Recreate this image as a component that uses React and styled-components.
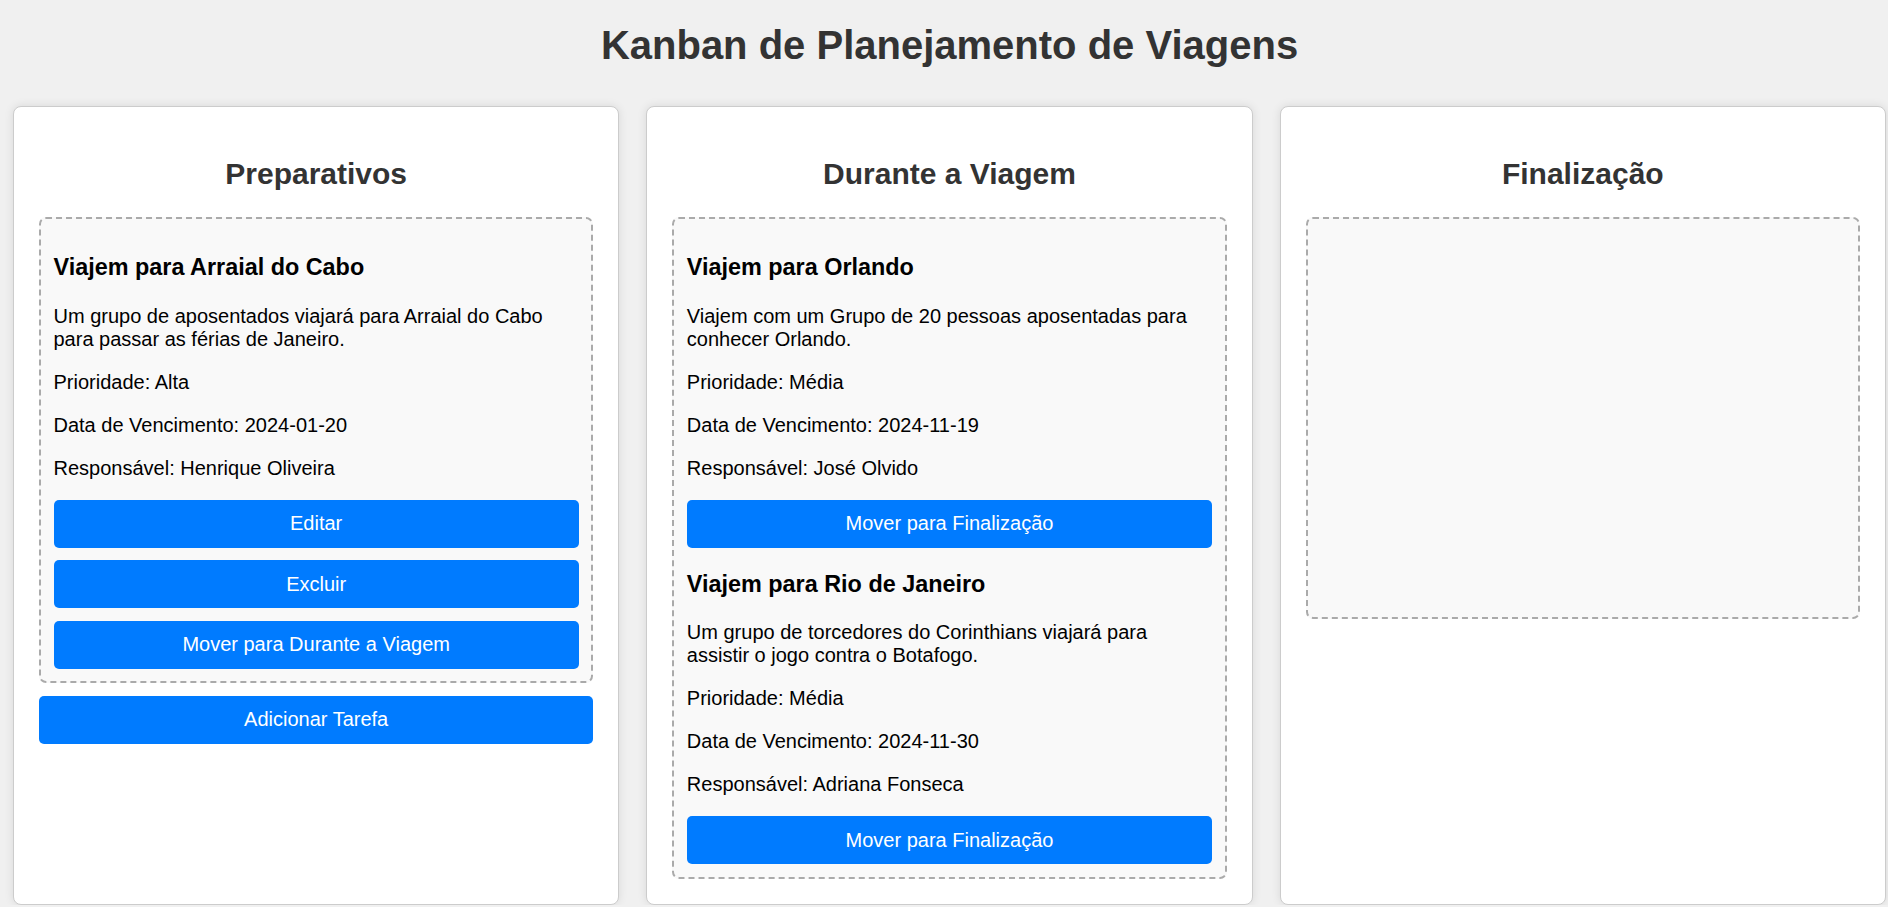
import React from "react";
import styled, { createGlobalStyle } from "styled-components";

const GlobalStyle = createGlobalStyle`
  html, body {
    margin: 0;
    padding: 0;
    background: #f0f0f0;
    font-family: "Liberation Sans", Arial, sans-serif;
  }
  * { box-sizing: border-box; }
`;

const Page = styled.div`
  background: #f0f0f0;
  padding: 0 2px 0 13px;
`;

const Title = styled.h1`
  margin: 0;
  padding: 22px 0 38px;
  font-size: 40px;
  line-height: 46px;
  font-weight: bold;
  color: #333;
  text-align: center;
`;

const Board = styled.div`
  display: flex;
  align-items: stretch;
  gap: 27px;
`;

const Column = styled.section`
  flex: 1 1 0;
  min-width: 0;
  background: #fff;
  border: 1px solid #ccc;
  border-radius: 8px;
  box-shadow: 0 0 10px rgba(0, 0, 0, 0.1);
  padding: 25px;
`;

const ColumnTitle = styled.h2`
  margin: 25px 0;
  font-size: 30px;
  line-height: 34.5px;
  font-weight: bold;
  color: #333;
  text-align: center;
`;

const DropZone = styled.div`
  box-sizing: content-box;
  min-height: 373px;
  background: #f9f9f9;
  border: 2px dashed #aaa;
  border-radius: 7px;
  padding: 12.5px;
  display: flow-root;
`;

const Task = styled.div``;

const TaskTitle = styled.h3`
  margin: 23.4px 0;
  font-size: 23.4px;
  line-height: 26.9px;
  font-weight: bold;
  color: #000;
`;

const Text = styled.p`
  margin: 20px 0;
  font-size: 20px;
  line-height: 23px;
  color: #000;
`;

const Button = styled.button`
  display: block;
  width: 100%;
  margin: 12.5px 0 0;
  padding: 12.5px;
  border: none;
  border-radius: 5px;
  background: #007bff;
  color: #fff;
  font-family: "Liberation Sans", Arial, sans-serif;
  font-size: 20px;
  line-height: 23px;
  cursor: pointer;
  text-align: center;
`;

const columns = [
  {
    title: "Preparativos",
    tasks: [
      {
        title: "Viajem para Arraial do Cabo",
        desc: "Um grupo de aposentados viajará para Arraial do Cabo para passar as férias de Janeiro.",
        priority: "Alta",
        due: "2024-01-20",
        owner: "Henrique Oliveira",
        actions: ["Editar", "Excluir", "Mover para Durante a Viagem"],
      },
    ],
    add: true,
  },
  {
    title: "Durante a Viagem",
    tasks: [
      {
        title: "Viajem para Orlando",
        desc: "Viajem com um Grupo de 20 pessoas aposentadas para conhecer Orlando.",
        priority: "Média",
        due: "2024-11-19",
        owner: "José Olvido",
        actions: ["Mover para Finalização"],
      },
      {
        title: "Viajem para Rio de Janeiro",
        desc: "Um grupo de torcedores do Corinthians viajará para assistir o jogo contra o Botafogo.",
        priority: "Média",
        due: "2024-11-30",
        owner: "Adriana Fonseca",
        actions: ["Mover para Finalização"],
      },
    ],
  },
  { title: "Finalização", tasks: [] },
];

export default function App() {
  return (
    <Page>
      <GlobalStyle />
      <Title>Kanban de Planejamento de Viagens</Title>
      <Board>
        {columns.map((col) => (
          <Column key={col.title}>
            <ColumnTitle>{col.title}</ColumnTitle>
            <DropZone>
              {col.tasks.map((t) => (
                <Task key={t.title}>
                  <TaskTitle>{t.title}</TaskTitle>
                  <Text>{t.desc}</Text>
                  <Text>Prioridade: {t.priority}</Text>
                  <Text>Data de Vencimento: {t.due}</Text>
                  <Text>Responsável: {t.owner}</Text>
                  {t.actions.map((a) => (
                    <Button key={a}>{a}</Button>
                  ))}
                </Task>
              ))}
            </DropZone>
            {col.add && <Button>Adicionar Tarefa</Button>}
          </Column>
        ))}
      </Board>
    </Page>
  );
}
